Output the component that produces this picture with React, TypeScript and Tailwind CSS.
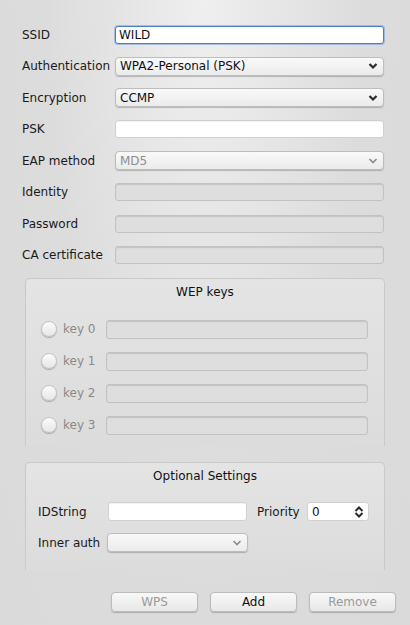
import React from 'react';

const FONT = { fontFamily: '"DejaVu Sans", "Liberation Sans", sans-serif' };

function Chevron({ disabled }: { disabled?: boolean }) {
  return (
    <svg width="10" height="8" viewBox="0 0 10 8" className="shrink-0">
      <path
        d="M1.5 2 L5 5.5 L8.5 2"
        fill="none"
        stroke={disabled ? '#8a8a8a' : '#2a2a2a'}
        strokeWidth={disabled ? 1.6 : 2.2}
      />
    </svg>
  );
}

function TextInput({ value, focused, disabled, className = '' }: { value?: string; focused?: boolean; disabled?: boolean; className?: string }) {
  return (
    <div
      className={[
        'flex items-center h-[18px] px-[3px] rounded-[3px] text-[12px] text-[#111]',
        focused
          ? 'bg-white border border-[#4d7fc7] shadow-[0_0_0_1px_rgba(90,140,210,0.45)]'
          : disabled
          ? 'bg-[#dedede] border border-[#c2c2c2] shadow-[inset_0_1px_1px_rgba(0,0,0,0.12)]'
          : 'bg-white border border-[#d0d0d0] shadow-[inset_0_1px_1px_rgba(0,0,0,0.05)]',
        className,
      ].join(' ')}
    >
      {value}
    </div>
  );
}

function Select({ value, disabled, className = '' }: { value?: string; disabled?: boolean; className?: string }) {
  return (
    <div
      className={[
        'flex items-center justify-between h-[19px] pl-[4px] pr-[5px] rounded-[4px] text-[12px] border border-[#bdbdbd] bg-gradient-to-b from-[#f9f9f9] to-[#ebebeb] shadow-[0_1px_1px_rgba(0,0,0,0.22)]',
        disabled ? 'text-[#8e8e8e]' : 'text-[#111]',
        className,
      ].join(' ')}
    >
      <span>{value}</span>
      <Chevron disabled={disabled} />
    </div>
  );
}

function Row({ label, children }: { label: string; children: React.ReactNode }) {
  return (
    <div className="flex items-center h-[31.5px]">
      <div className="w-[93px] text-[12px] text-[#1a1a1a] whitespace-nowrap">{label}</div>
      <div className="w-[269px]">{children}</div>
    </div>
  );
}

function Radio() {
  return (
    <div className="w-[16px] h-[16px] rounded-full border border-[#c4c4c4] bg-gradient-to-b from-[#fbfbfb] to-[#e6e6e6] shadow-[0_1px_1px_rgba(0,0,0,0.25)] shrink-0" />
  );
}

function Button({ label, disabled }: { label: string; disabled?: boolean }) {
  return (
    <div
      className={[
        'flex items-center justify-center w-[87px] h-[20px] rounded-[4px] border border-[#bcbcbc] bg-gradient-to-b from-[#f8f8f8] to-[#e8e8e8] shadow-[0_1px_1px_rgba(0,0,0,0.22)] text-[12px]',
        disabled ? 'text-[#9a9a9a]' : 'text-[#111]',
      ].join(' ')}
    >
      {label}
    </div>
  );
}

function GroupBox({ title, className = '', children }: { title: string; className?: string; children: React.ReactNode }) {
  return (
    <div
      className={[
        'mx-[25px] w-[360px] rounded-t-[5px] border-t border-x border-[#c9c9c9] bg-gradient-to-b from-[#e4e4e4] to-[#dcdcdc]',
        className,
      ].join(' ')}
    >
      <div className="text-center text-[12px] text-[#111] pt-[5px] leading-[16px]">{title}</div>
      {children}
    </div>
  );
}

export default function App() {
  const keys = ['key 0', 'key 1', 'key 2', 'key 3'];
  return (
    <div
      style={FONT}
      className="w-[410px] h-[625px] overflow-hidden flex flex-col bg-[radial-gradient(ellipse_at_50%_0%,#efefef_0%,#dcdcdc_55%,#dadada_100%)]"
    >
      <div className="pt-[19px] pl-[22px] flex flex-col">
        <Row label="SSID">
          <TextInput value="WILD" focused />
        </Row>
        <Row label="Authentication">
          <Select value="WPA2-Personal (PSK)" />
        </Row>
        <Row label="Encryption">
          <Select value="CCMP" />
        </Row>
        <Row label="PSK">
          <TextInput />
        </Row>
        <Row label="EAP method">
          <Select value="MD5" disabled />
        </Row>
        <Row label="Identity">
          <TextInput disabled />
        </Row>
        <Row label="Password">
          <TextInput disabled />
        </Row>
        <Row label="CA certificate">
          <TextInput disabled />
        </Row>
      </div>

      <GroupBox title="WEP keys" className="mt-[7px] h-[168px]">
        <div className="mt-[13px] flex flex-col">
          {keys.map((k) => (
            <div key={k} className="flex items-center h-[32px] pl-[15px] pr-[16px]">
              <Radio />
              <span className="ml-[6px] w-[43px] text-[12px] text-[#8a8a8a]">{k}</span>
              <TextInput disabled className="flex-1 h-[19px]" />
            </div>
          ))}
        </div>
      </GroupBox>

      <GroupBox title="Optional Settings" className="mt-[16px] h-[108px]">
        <div className="mt-[12px] flex flex-col pl-[12px]">
          <div className="flex items-center h-[31px]">
            <span className="w-[70px] text-[12px] text-[#1a1a1a]">IDString</span>
            <TextInput className="w-[139px] h-[19px]" />
            <span className="ml-[10px] w-[50px] text-[12px] text-[#1a1a1a]">Priority</span>
            <div className="flex items-center justify-between w-[62px] h-[19px] pl-[4px] pr-[4px] rounded-[3px] bg-white border border-[#d0d0d0] text-[12px] text-[#111]">
              <span>0</span>
              <svg width="10" height="12" viewBox="0 0 10 12">
                <path d="M1.5 5 L5 1.5 L8.5 5" fill="none" stroke="#2a2a2a" strokeWidth="2" />
                <path d="M1.5 7 L5 10.5 L8.5 7" fill="none" stroke="#2a2a2a" strokeWidth="2" />
              </svg>
            </div>
          </div>
          <div className="flex items-center h-[31px]">
            <span className="w-[69px] text-[12px] text-[#1a1a1a]">Inner auth</span>
            <Select disabled className="w-[141px]" />
          </div>
        </div>
      </GroupBox>

      <div className="mt-[22px] flex justify-end gap-[12px] pr-[14px]">
        <Button label="WPS" disabled />
        <Button label="Add" />
        <Button label="Remove" disabled />
      </div>
    </div>
  );
}
